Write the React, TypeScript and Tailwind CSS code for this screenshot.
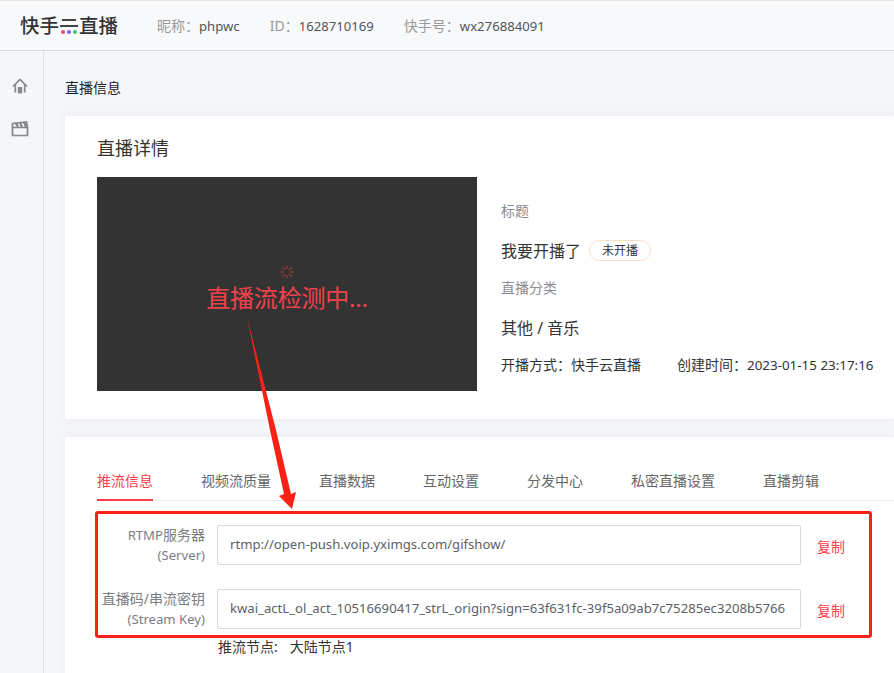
const font = "font-['Noto_Sans','Noto_Sans_CJK_SC',sans-serif]";

const tabs = ['推流信息', '视频流质量', '直播数据', '互动设置', '分发中心', '私密直播设置', '直播剪辑'];

function HomeIcon() {
  return (
    <svg width="16" height="16" viewBox="0 0 16 16" fill="none" stroke="#85878c" strokeWidth="1.7">
      <path d="M1 8.500 8 1.500 15 8.500" />
      <path d="M3.300 7v7.500M12.700 7v7.500" />
      <path d="M6.300 15V9.500h3.400V15z" fill="#85878c" strokeWidth="1" />
    </svg>
  );
}

function ClapperIcon() {
  return (
    <svg width="18" height="16" viewBox="0 0 18 16" fill="none" stroke="#85878c" strokeWidth="1.700">
      <path d="M1.500 6.500h15v8h-15z" />
      <path d="M1.500 6.500V2.500L15.500 1l1 5.500" />
      <path d="M5 2.200 7 6M9 1.700 11 6M13 1.200 15 6" strokeWidth="2.200" />
    </svg>
  );
}

function Spinner() {
  const spokes = [0, 45, 90, 135, 180, 225, 270, 315];
  return (
    <svg width="14" height="14" viewBox="0 0 14 14" stroke="#b5383f" strokeWidth="1.200">
      {spokes.map((a) => (
        <line key={a} x1="7" y1="0.800" x2="7" y2="3.800" transform={`rotate(${a} 7 7)`} />
      ))}
    </svg>
  );
}

function Logo() {
  return (
    <div className="flex items-center shrink-0 text-[19.500px] leading-none font-medium text-[#333] w-[98px] whitespace-nowrap">
      <span className="shrink-0">快手</span>
      {/* the middle character of the logo is two bars with coloured dots */}
      <span className="flex flex-col shrink-0 w-[18px] mx-[1px] mt-[1px]">
        <span className="h-[2px] mx-[2px] bg-[#444]" />
        <span className="h-[2px] mt-[4px] bg-[#444]" />
        <span className="flex justify-between px-[1px] mt-[3px]">
          <span className="w-[4px] h-[4px] rounded-full bg-[#f0476a]" />
          <span className="w-[4px] h-[4px] rounded-full bg-[#8b5cf6]" />
          <span className="w-[4px] h-[4px] rounded-full bg-[#34c77b]" />
        </span>
      </span>
      <span className="shrink-0">直播</span>
    </div>
  );
}

function Field({ label, sub, value }: { label: React.ReactNode; sub: string; value: string }) {
  return (
    <div className="flex h-[40px] items-stretch">
      <div className="w-[108px] text-right text-[14px] leading-[20px] text-[#7a7d84]">
        <div>{label}</div>
        <div className="text-[13.150px]">{sub}</div>
      </div>
      <div className="ml-[12px] w-[584px] h-[40px] border border-[#d9d9d9] rounded-[2px] pl-[12px] flex items-center text-[13.150px] text-[#5c5f66] whitespace-nowrap overflow-hidden">
        {value}
      </div>
      <div className="ml-[16px] pt-[12px] text-[14px] leading-[20px] text-[#fe4050]">复制</div>
    </div>
  );
}

export default function App() {
  return (
    <div className={`relative h-[673px] w-[894px] overflow-hidden bg-[#f5f6fa] flex flex-col ${font}`}>
      <header className="h-[51px] shrink-0 border-t border-t-[#e6e6e6] border-b border-b-[#d8d9dc] bg-[#f8f9fb] flex items-center pl-[20px] text-[14px]">
        <Logo />
        <div className="ml-[39px] flex items-baseline">
          <span className="text-[#999]">昵称：</span>
          <span className="text-[13.150px] text-[#555]">phpwc</span>
        </div>
        <div className="ml-[30px] flex items-baseline">
          <span className="text-[#999]">ID：</span>
          <span className="text-[13.150px] text-[#555]">1628710169</span>
        </div>
        <div className="ml-[30px] flex items-baseline">
          <span className="text-[#999]">快手号：</span>
          <span className="text-[13.150px] text-[#555]">wx276884091</span>
        </div>
      </header>

      <div className="flex flex-1 min-h-0">
        <aside className="w-[44px] shrink-0 border-r border-[#e0e1e5] flex flex-col items-center pt-[27px] pr-[3px] gap-[27px]">
          <HomeIcon />
          <ClapperIcon />
        </aside>

        <main className="flex-1 min-w-0 pl-[21px]">
          <div className="h-[65px] pt-[27px] text-[14px] leading-[20px] text-[#222]">直播信息</div>

          <section className="h-[303px] bg-white shadow-[0_0_8px_rgba(0,0,0,0.05)] pl-[32px] pt-[20px]">
            <h2 className="text-[18px] leading-[24px] text-[#333]">直播详情</h2>
            <div className="flex mt-[17px]">
              <div className="w-[380px] h-[214px] bg-[#333] flex flex-col items-center pt-[88px] text-[#f0424c]">
                <Spinner />
                <div className="text-[24px] leading-[32px] mt-[3px] tracking-[-0.2px]">直播流检测中...</div>
              </div>
              <div className="ml-[24px] text-[#333]">
                <div className="mt-[24px] text-[14px] leading-[20px] text-[#8a8d94]">标题</div>
                <div className="mt-[19px] flex items-center text-[16px] leading-[20px]">
                  我要开播了
                  <span className="ml-[8px] h-[21px] w-[62px] rounded-full border border-[#fbdcc4] text-[12px] leading-[19px] text-center">
                    未开播
                  </span>
                </div>
                <div className="mt-[17px] text-[14px] leading-[20px] text-[#8a8d94]">直播分类</div>
                <div className="mt-[20px] text-[16px] leading-[20px]">其他 / 音乐</div>
                <div className="mt-[17px] flex items-baseline text-[14px] leading-[20px] whitespace-nowrap">
                  <span>开播方式：快手云直播</span>
                  <span className="ml-[36px]">创建时间：</span>
                  <span className="text-[13.400px]">2023-01-15 23:17:16</span>
                </div>
              </div>
            </div>
          </section>

          <section className="mt-[18px] h-[240px] bg-white shadow-[0_0_8px_rgba(0,0,0,0.05)] pl-[32px] pt-[28px]">
            <div className="flex gap-[48px] h-[36px] border-b border-[#e8e8e8] text-[14px] leading-[32px] text-[#666]">
              {tabs.map((t, i) => (
                <div key={t} className={i === 0 ? 'h-[36px] border-b-2 border-[#fe3d4c] text-[#fe3d4c]' : ''}>
                  {t}
                </div>
              ))}
            </div>
            <div className="mt-[24px] flex flex-col gap-[24px]">
              <Field
                label={
                  <>
                    <span className="text-[13.150px]">RTMP</span>服务器
                  </>
                }
                sub="(Server)"
                value="rtmp://open-push.voip.yximgs.com/gifshow/"
              />
              <Field
                label="直播码/串流密钥"
                sub="(Stream Key)"
                value="kwai_actL_ol_act_10516690417_strL_origin?sign=63f631fc-39f5a09ab7c75285ec3208b5766"
              />
            </div>
            <div className="ml-[121px] mt-[8px] text-[14px] leading-[20px] text-[#333] flex">
              <span>推流节点:</span>
              <span className="ml-[12px]">大陆节点1</span>
            </div>
          </section>
        </main>
      </div>

      {/* red annotation drawn over the screenshot */}
      <div className="absolute left-[95px] top-[511px] w-[777px] h-[127px] border-[3px] border-[#fb2116] rounded-[3px]" />
      <svg className="absolute left-[240px] top-[310px]" width="70" height="205" viewBox="240 310 70 205">
        <path d="M247 317 276 430 291 494 296 492 292 509 279 496 284 494 270 430Z" fill="#fb2116" />
      </svg>
    </div>
  );
}
